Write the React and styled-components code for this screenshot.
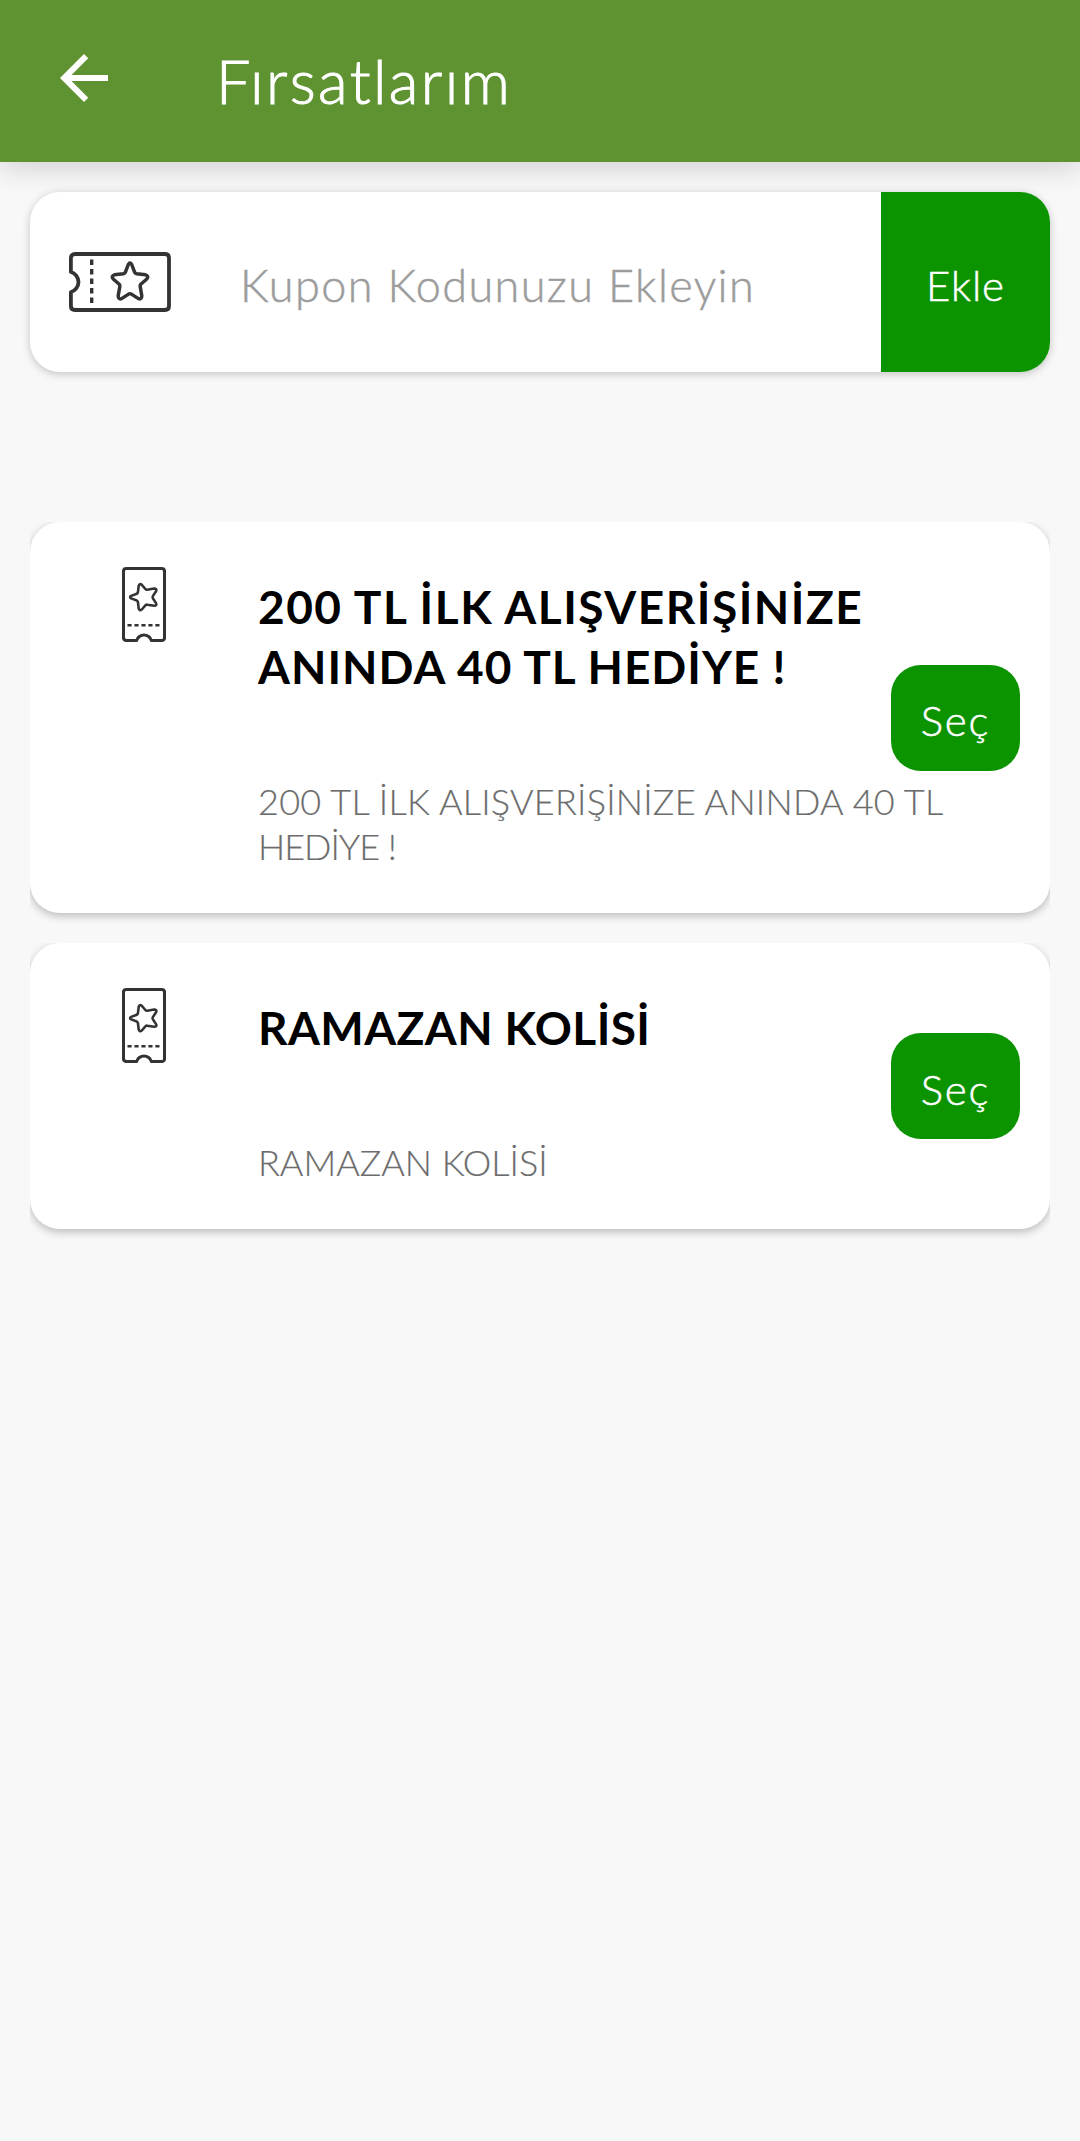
import React from "react";
import styled, { createGlobalStyle } from "styled-components";

const GlobalStyle = createGlobalStyle`
  *, *::before, *::after { box-sizing: border-box; }
  body {
    margin: 0;
    background: #f8f8f8;
    font-family: Lato, "Open Sans", sans-serif;
    font-weight: 300;
  }
  button, input { font: inherit; border: 0; padding: 0; margin: 0; outline: 0; }
`;

const Screen = styled.div`
  display: flex;
  flex-direction: column;
  width: 1080px;
  min-height: 2141px;
  background: #f8f8f8;
`;

const AppBar = styled.header`
  display: flex;
  align-items: flex-start;
  height: 162px;
  padding: 42px 48px 0;
  background: #5f9332;
  color: #fff;
  box-shadow: 0 6px 28px rgba(0, 0, 0, 0.16);
`;

const BackButton = styled.button`
  display: flex;
  width: 72px;
  height: 72px;
  background: none;
  color: inherit;
`;

const PageTitle = styled.h1`
  margin: 3px 0 0 96px;
  font-size: 61px;
  line-height: 72px;
  font-weight: 300;
  letter-spacing: 2.4px;
  -webkit-text-stroke: 1px currentColor;
`;

const Content = styled.main`
  display: flex;
  flex-direction: column;
  padding: 30px 30px 0;
`;

const CouponForm = styled.div`
  display: flex;
  align-items: stretch;
  height: 180px;
  margin-bottom: 150px;
  overflow: hidden;
  border-radius: 30px;
  background: #fff;
  box-shadow: 0 2px 9px rgba(0, 0, 0, 0.22);
`;

const TicketSlot = styled.div`
  display: flex;
  align-items: center;
  width: 210px;
  padding-left: 39px;
`;

const CouponInput = styled.input`
  flex: 1;
  min-width: 0;
  padding-top: 5px;
  background: transparent;
  font-size: 45px;
  letter-spacing: 1.4px;
  color: #333;
  &::placeholder {
    color: #9c9c9c;
    opacity: 1;
    -webkit-text-stroke: 0.5px #9c9c9c;
  }
`;

const GreenButton = styled.button`
  width: ${(p) => p.$width}px;
  height: ${(p) => p.$height}px;
  padding-top: 5px;
  border-radius: ${(p) => p.$radius || 0}px;
  background: #0b9400;
  color: #fff;
  font-size: 42px;
  letter-spacing: ${(p) => p.$tracking}px;
  -webkit-text-stroke: 0.5px currentColor;
`;

const OfferList = styled.ul`
  display: flex;
  flex-direction: column;
  gap: 30px;
  margin: 0;
  padding: 0;
  list-style: none;
`;

const OfferItem = styled.li`
  clip-path: inset(0 0 -24px 0);
`;

const OfferCard = styled.article`
  position: relative;
  display: flex;
  align-items: flex-start;
  border-radius: 30px;
  background: #fff;
  box-shadow: 0 3px 8px rgba(0, 0, 0, 0.25);
`;

const OfferIcon = styled.div`
  display: flex;
  width: 228px;
  padding: 45px 0 0 92px;
`;

const OfferBody = styled.div`
  flex: 1;
  padding: 55px 0 44px;
`;

const OfferTitle = styled.h2`
  margin: 0 0 82px;
  font-size: 46px;
  line-height: 60px;
  font-weight: 700;
  color: #000;
`;

const OfferText = styled.p`
  margin: 0;
  font-size: 36px;
  line-height: 45px;
  color: #6c6c6c;
  -webkit-text-stroke: 0.2px currentColor;
`;

const Line = styled.span`
  display: block;
  white-space: nowrap;
  letter-spacing: ${(p) => p.$tracking}px;
`;

/* The select button floats over the card's text, centred on its height. */
const OfferAction = styled.div`
  position: absolute;
  right: 30px;
  top: 50%;
  display: flex;
  transform: translateY(-50%);
`;

function Ticket({ vertical }) {
  return (
    <svg
      width={vertical ? 44 : 102}
      height={vertical ? 75 : 60}
      viewBox={vertical ? "0 0 60 102" : "0 0 102 60"}
      fill="none"
      stroke="#333"
      strokeWidth={vertical ? 4.2 : 3.8}
      strokeLinejoin="round"
      aria-hidden="true"
    >
      <g transform={vertical ? "matrix(0 -1 1 0 0 102)" : undefined}>
        <path d="M1.9 20V6Q1.9 2 6 2H96Q100 2 100 6V54Q100 58 96 58H6Q1.9 58 1.9 54V40C6 39 9.5 34.5 9.5 30S6 21 1.9 20Z" />
        <path d="M22.7 7.5V53" strokeWidth="3.4" strokeDasharray="5.6 3.9" />
        <path
          strokeWidth="3.5"
          d="M59.3 12.5Q61 9.5 62.7 12.5L65.6 20.2Q66.2 21.4 67.6 21.7L76.6 22.8Q80.2 24 77.8 27L71.8 32.2Q70.9 33.2 71.2 34.6L72.8 43.8Q72.8 47.8 69.4 46.6L62.4 42.1Q61 41.3 59.6 42.1L52.6 46.6Q49.2 47.8 49.2 43.8L50.8 34.6Q51.1 33.2 50.2 32.2L44.2 27Q41.8 24 45.4 22.8L54.4 21.7Q55.8 21.4 56.4 20.2Z"
        />
      </g>
    </svg>
  );
}

function BackArrow() {
  return (
    <svg width="72" height="72" viewBox="0 0 24 24" fill="currentColor" aria-hidden="true">
      <path d="M20 11H7.83l5.59-5.59L12 4l-8 8 8 8 1.41-1.41L7.83 13H20v-2z" />
    </svg>
  );
}

const offers = [
  {
    id: 1,
    title: [
      ["200 TL İLK ALIŞVERİŞİNİZE", 1.5],
      ["ANINDA 40 TL HEDİYE !", 1],
    ],
    text: [
      ["200 TL İLK ALIŞVERİŞİNİZE ANINDA 40 TL", 0.25],
      ["HEDİYE !", -1],
    ],
  },
  {
    id: 2,
    title: [["RAMAZAN KOLİSİ", 0.4]],
    text: [["RAMAZAN KOLİSİ", 0]],
  },
];

const renderLines = (lines) =>
  lines.map(([text, tracking]) => (
    <Line key={text} $tracking={tracking}>
      {text}
    </Line>
  ));

export default function App() {
  return (
    <Screen>
      <GlobalStyle />
      <AppBar>
        <BackButton aria-label="Geri">
          <BackArrow />
        </BackButton>
        <PageTitle>Fırsatlarım</PageTitle>
      </AppBar>
      <Content>
        <CouponForm>
          <TicketSlot>
            <Ticket />
          </TicketSlot>
          <CouponInput placeholder="Kupon Kodunuzu Ekleyin" />
          <GreenButton $width={169} $height={180} $tracking={0.9}>
            Ekle
          </GreenButton>
        </CouponForm>
        <OfferList>
          {offers.map((offer) => (
            <OfferItem key={offer.id}>
              <OfferCard>
                <OfferIcon>
                  <Ticket vertical />
                </OfferIcon>
                <OfferBody>
                  <OfferTitle>{renderLines(offer.title)}</OfferTitle>
                  <OfferText>{renderLines(offer.text)}</OfferText>
                </OfferBody>
                <OfferAction>
                  <GreenButton $width={129} $height={106} $radius={30} $tracking={1.8}>
                    Seç
                  </GreenButton>
                </OfferAction>
              </OfferCard>
            </OfferItem>
          ))}
        </OfferList>
      </Content>
    </Screen>
  );
}
